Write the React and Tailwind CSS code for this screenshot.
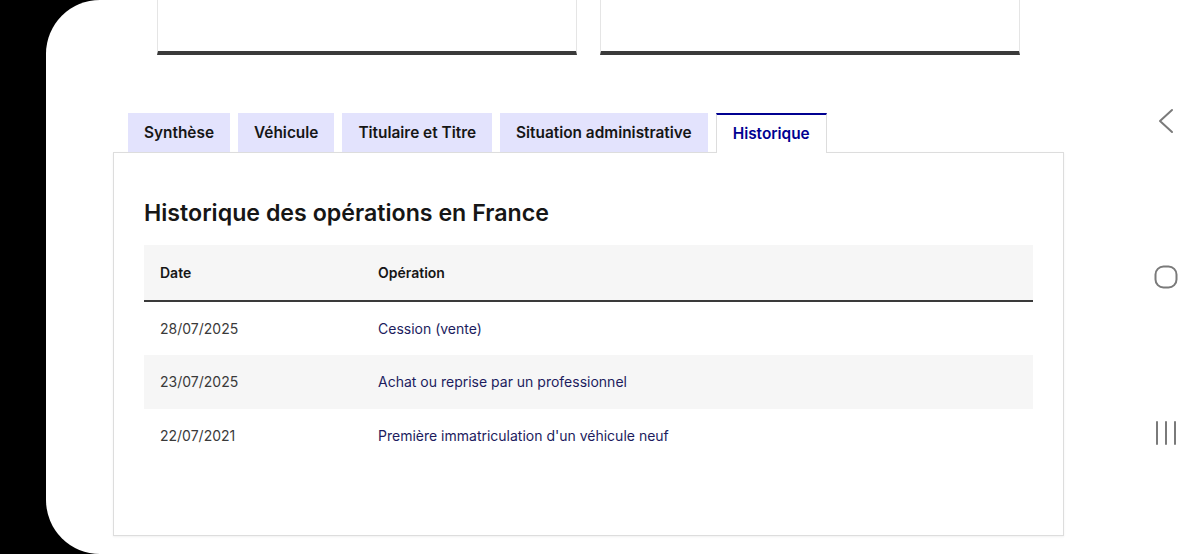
const tabs = [
    { label: 'Synthèse' },
    { label: 'Véhicule' },
    { label: 'Titulaire et Titre' },
    { label: 'Situation administrative' },
    { label: 'Historique', active: true },
];

const rows = [
    { date: '28/07/2025', op: 'Cession (vente)' },
    { date: '23/07/2025', op: 'Achat ou reprise par un professionnel' },
    { date: '22/07/2021', op: "Première immatriculation d'un véhicule neuf" },
];

function NavBar() {
    return (
        <div className="flex w-[68px] shrink-0 flex-col items-center pt-[108px] text-[#7a7a7a]">
            <svg width="18" height="26" viewBox="0 0 18 26" fill="none">
                <path d="M15 2 L3 13 L15 24" stroke="currentColor" strokeWidth="2" strokeLinecap="round" strokeLinejoin="round" />
            </svg>
            <svg className="mt-[131px]" width="24" height="24" viewBox="0 0 24 24" fill="none">
                <rect x="1.5" y="1.5" width="21" height="21" rx="8" stroke="currentColor" strokeWidth="2" />
            </svg>
            <svg className="mt-[132px]" width="22" height="24" viewBox="0 0 22 24" fill="none">
                <path d="M2 1 V23 M11 1 V23 M20 1 V23" stroke="currentColor" strokeWidth="2" strokeLinecap="round" />
            </svg>
        </div>
    );
}

export default function App() {
    return (
        <div
            className="flex h-[554px] w-[1200px] overflow-hidden bg-black"
            style={{ fontFamily: 'Inter, "Noto Sans", sans-serif' }}>
            <div className="ml-[46px] flex flex-1 rounded-l-[54px] bg-white">
                <div className="flex-1 pl-[67px]">
                    <div className="ml-[44px] flex gap-[23px]">
                        <div className="h-[55px] w-[420px] border-x border-b-4 border-x-[#e5e5e5] border-b-[#3a3a3a]" />
                        <div className="h-[55px] w-[420px] border-x border-b-4 border-x-[#e5e5e5] border-b-[#3a3a3a]" />
                    </div>

                    <div className="relative z-10 mt-[58px] flex gap-2 pl-[15px]">
                        {tabs.map((t) =>
                            t.active ? (
                                <div
                                    key={t.label}
                                    className="-mb-px flex h-[40px] items-center border-x border-t-2 border-x-[#dddddd] border-t-[#000091] bg-white px-4 text-[15.4px] font-semibold text-[#000091]">
                                    {t.label}
                                </div>
                            ) : (
                                <div
                                    key={t.label}
                                    className="flex h-[39px] items-center bg-[#e3e3fd] px-4 text-[15.4px] font-semibold text-[#161616]">
                                    {t.label}
                                </div>
                            )
                        )}
                    </div>

                    <div className="h-[384px] w-[951px] border border-[#dddddd] px-[30px] pt-[44px] shadow-[0_1px_2px_rgba(0,0,0,0.06)]">
                        <h2 className="text-[23.2px] leading-[32px] font-semibold text-[#161616]">
                            Historique des opérations en France
                        </h2>

                        <table className="mt-4 w-full border-collapse text-left text-sm">
                            <thead>
                                <tr className="h-[56px] border-b-2 border-[#3a3a3a] bg-[#f6f6f6]">
                                    <th className="w-[218px] px-4 font-semibold text-[#161616]">Date</th>
                                    <th className="px-4 font-semibold text-[#161616]">Opération</th>
                                </tr>
                            </thead>
                            <tbody>
                                {rows.map((r, i) => (
                                    <tr key={r.date} className={i % 2 === 1 ? 'h-[54px] bg-[#f6f6f6]' : 'h-[54px]'}>
                                        <td className="px-4 text-[#3a3a3a]">{r.date}</td>
                                        <td className="px-4 text-[#1c1c5e]">{r.op}</td>
                                    </tr>
                                ))}
                            </tbody>
                        </table>
                    </div>
                </div>

                <NavBar />
            </div>
        </div>
    );
}
